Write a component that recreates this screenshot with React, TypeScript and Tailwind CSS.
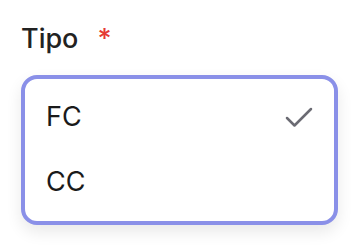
import { Check } from "lucide-react";

const options = [
  { label: "FC", selected: true },
  { label: "CC", selected: false },
];

export default function App() {
  return (
    <div className="min-h-screen bg-white font-['Inter',sans-serif] px-[21px] pt-[19px]">
      <div className="flex items-center gap-[19px] text-[27px] leading-[40px]">
        <span className="font-medium text-[#222222]">Tipo</span>
        <span className="font-medium text-[#e53935]">*</span>
      </div>
      <div className="mt-[16px] w-[317px] rounded-[16px] border-4 border-[#8a90e8] bg-white py-[6px] shadow-[0_7px_16px_rgba(0,0,0,0.09)]">
        {options.map((o) => (
          <div key={o.label} className="flex h-[65px] items-center justify-between pl-[21px] pr-[17px]">
            <span className="text-[27px] text-[#1a1a1a]">{o.label}</span>
            {o.selected && <Check className="h-[36px] w-[36px] text-[#6b6b73]" strokeWidth={1.7} />}
          </div>
        ))}
      </div>
    </div>
  );
}
